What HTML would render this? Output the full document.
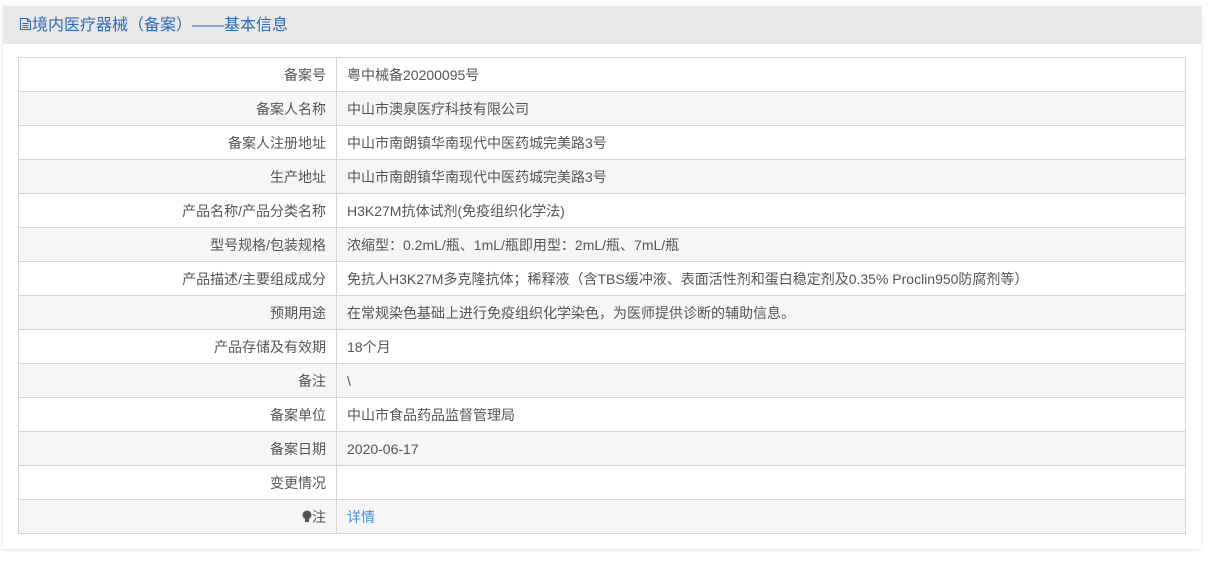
<!DOCTYPE html>
<html><head><meta charset="utf-8"><style>
body{margin:0;background:#fff;font-family:"Liberation Sans","Noto Sans CJK SC",sans-serif;}
.panel{position:absolute;left:3px;top:6px;width:1198px;height:543px;background:#fff;box-shadow:0 1px 4px rgba(0,0,0,0.12);}
.hd{height:38px;background:#e8e8e8;color:#2f6bb5;font-size:16px;line-height:40px;padding-left:16px;}
table{position:absolute;left:15px;top:51px;width:1168px;border-collapse:collapse;font-size:14px;color:#555;}
td{border:1px solid #d4d4d4;height:33px;padding:0 10px;}
td.l{width:297px;text-align:right;}
tr:nth-child(even) td{background:#f6f6f6;}
a{color:#3a8ee6;text-decoration:none;}
</style></head><body>
<div class="panel">
<div class="hd"><svg width="13" height="14" viewBox="0 0 13 14" style="vertical-align:-1px"><path d="M1.5 1.5h7l3 3v8h-10z M8.5 1.5v3h3 M3.5 6.5h6 M3.5 8.5h6 M3.5 10.5h6" fill="none" stroke="#2f6bb5" stroke-width="1.1"/></svg>境内医疗器械（备案）——基本信息</div>
<table>
<tr><td class="l">备案号</td><td>粤中械备20200095号</td></tr>
<tr><td class="l">备案人名称</td><td>中山市澳泉医疗科技有限公司</td></tr>
<tr><td class="l">备案人注册地址</td><td>中山市南朗镇华南现代中医药城完美路3号</td></tr>
<tr><td class="l">生产地址</td><td>中山市南朗镇华南现代中医药城完美路3号</td></tr>
<tr><td class="l">产品名称/产品分类名称</td><td>H3K27M抗体试剂(免疫组织化学法)</td></tr>
<tr><td class="l">型号规格/包装规格</td><td>浓缩型：0.2mL/瓶、1mL/瓶即用型：2mL/瓶、7mL/瓶</td></tr>
<tr><td class="l">产品描述/主要组成成分</td><td>免抗人H3K27M多克隆抗体；稀释液（含TBS缓冲液、表面活性剂和蛋白稳定剂及0.35% Proclin950防腐剂等）</td></tr>
<tr><td class="l">预期用途</td><td>在常规染色基础上进行免疫组织化学染色，为医师提供诊断的辅助信息。</td></tr>
<tr><td class="l">产品存储及有效期</td><td>18个月</td></tr>
<tr><td class="l">备注</td><td>\</td></tr>
<tr><td class="l">备案单位</td><td>中山市食品药品监督管理局</td></tr>
<tr><td class="l">备案日期</td><td>2020-06-17</td></tr>
<tr><td class="l">变更情况</td><td></td></tr>
<tr><td class="l"><svg width="10" height="13" viewBox="0 0 10 13" style="vertical-align:-1px"><circle cx="5" cy="5" r="4.5" fill="#555"/><rect x="3" y="9" width="4" height="3" fill="#555"/></svg>注</td><td><a>详情</a></td></tr>
</table>
</div>
</body></html>
